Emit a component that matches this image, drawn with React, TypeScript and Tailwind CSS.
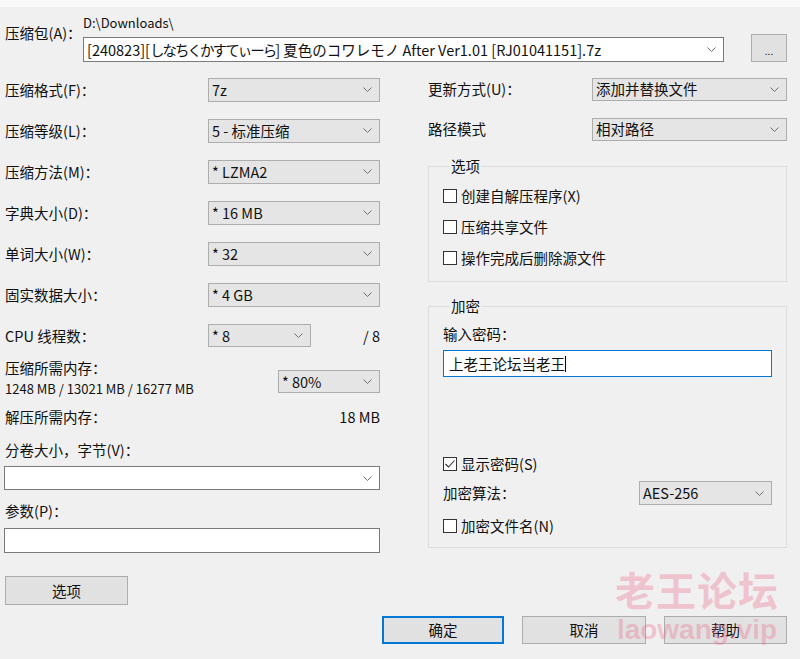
import clsx from "clsx";

function Chevron() {
  return (
    <svg width="9" height="5" viewBox="0 0 9 5" className="shrink-0">
      <path d="M0.5 0.5 L4.5 4.5 L8.5 0.5" stroke="#707070" strokeWidth="1" fill="none" />
    </svg>
  );
}

function Combo({ text, className, white }: { text?: React.ReactNode; className?: string; white?: boolean }) {
  return (
    <div
      className={clsx(
        "flex items-center border pl-[3px] pr-[7px] leading-[16px]",
        white ? "bg-white border-[#7a7a7a]" : "bg-[#e5e5e5] border-[#adadad]",
        className
      )}
    >
      <span className="flex-1 whitespace-nowrap">{text}</span>
      <Chevron />
    </div>
  );
}

function Check({ label, checked }: { label: string; checked?: boolean }) {
  return (
    <div className="flex items-center gap-[4px] leading-[16px]">
      <span className="w-[14px] h-[14px] border border-[#333] bg-white flex items-center justify-center">
        {checked && (
          <svg width="12" height="12" viewBox="0 0 12 12">
            <path d="M1.5 6 L4.5 9 L10.5 2.5" stroke="#333" strokeWidth="1.1" fill="none" />
          </svg>
        )}
      </span>
      <span>{label}</span>
    </div>
  );
}

function Btn({ label, className }: { label: string; className?: string }) {
  return (
    <div className={clsx("flex items-center justify-center bg-[#e1e1e1] border border-[#adadad] leading-[16px]", className)}>
      {label}
    </div>
  );
}

const rows = [
  { label: "压缩格式(F)：", value: "7z" },
  { label: "压缩等级(L)：", value: "5 - 标准压缩" },
  { label: "压缩方法(M)：", value: "* LZMA2" },
  { label: "字典大小(D)：", value: "* 16 MB" },
  { label: "单词大小(W)：", value: "* 32" },
  { label: "固实数据大小：", value: "* 4 GB" },
];

export default function App() {
  return (
    <div className="w-[800px] h-[659px] bg-[#f0f0f0] relative overflow-hidden text-[14.5px] text-[#111] font-['Noto_Sans_CJK_SC',sans-serif]">
      <div className="h-[7px] bg-[#f9f9f9]" />

      {/* archive path */}
      <div className="flex items-start">
        <div className="w-[83px] pl-[5px] mt-[18px] leading-[16px]">压缩包(A)：</div>
        <div className="w-[641px]">
          <div className="mt-[8px] leading-[16px] text-[13px]">D:\Downloads\</div>
          <Combo
            white
            className="mt-[6px] h-[25px]"
            text={
              <>
                [240823][<span className="tracking-[-2px]">しなちくかすてぃーら</span>] 夏色のコワレモノ After Ver1.01 [RJ01041151].7z
              </>
            }
          />
        </div>
        <div className="ml-[27px] mt-[27px] w-[36px] h-[28px] bg-[#e1e1e1] border border-[#adadad] flex items-end justify-center pb-[5px] text-[10px] leading-[10px]">
          ...
        </div>
      </div>

      <div className="flex mt-[7px]">
        {/* left column */}
        <div className="w-[376px] ml-[4px] flex flex-col">
          {rows.map((r) => (
            <div key={r.label} className="h-[41px] flex items-center">
              <span className="pl-[1px] leading-[16px]">{r.label}</span>
              <Combo text={r.value} className="ml-auto w-[172px] h-[24px]" />
            </div>
          ))}
          <div className="h-[41px] flex items-center">
            <span className="w-[204px] pl-[1px] leading-[16px]">CPU 线程数：</span>
            <Combo text="* 8" className="w-[103px] h-[23px]" />
            <span className="ml-auto leading-[16px]">/ 8</span>
          </div>

          <div className="flex pt-[4px]">
            <div className="pl-[1px] leading-[16px]">
              <div>压缩所需内存：</div>
              <div className="mt-[5px] text-[13px]">1248 MB / 13021 MB / 16277 MB</div>
            </div>
            <Combo text="* 80%" className="ml-auto mt-[10px] w-[102px] h-[23px]" />
          </div>

          <div className="mt-[12px] flex leading-[16px]">
            <span className="pl-[1px]">解压所需内存：</span>
            <span className="ml-auto">18 MB</span>
          </div>

          <div className="mt-[17px] pl-[1px] leading-[16px]">分卷大小，字节(V)：</div>
          <Combo white className="mt-[8px] h-[24px]" />

          <div className="mt-[13px] pl-[1px] leading-[16px]">参数(P)：</div>
          <div className="mt-[9px] h-[25px] bg-white border border-[#7a7a7a]" />

          <Btn label="选项" className="mt-[23px] ml-[1px] w-[123px] h-[29px]" />
        </div>

        {/* right column */}
        <div className="ml-[48px] w-[359px] flex flex-col">
          <div className="h-[40px] flex items-center">
            <span className="leading-[16px]">更新方式(U)：</span>
            <Combo text="添加并替换文件" className="ml-auto w-[195px] h-[23px]" />
          </div>
          <div className="h-[40px] flex items-center">
            <span className="leading-[16px]">路径模式</span>
            <Combo text="相对路径" className="ml-auto w-[195px] h-[23px]" />
          </div>

          <fieldset className="mt-[9px] border border-[#dcdcdc] pl-[14px] pr-[14px] pb-[8px]">
            <legend className="ml-[7px] px-[1px] leading-[16px]">选项</legend>
            <div className="pt-[6px]">
              <div className="h-[31px] flex items-center">
                <Check label="创建自解压程序(X)" />
              </div>
              <div className="h-[31px] flex items-center">
                <Check label="压缩共享文件" />
              </div>
              <div className="h-[31px] flex items-center">
                <Check label="操作完成后删除源文件" />
              </div>
            </div>
          </fieldset>

          <fieldset className="mt-[16px] border border-[#dcdcdc] pl-[14px] pr-[14px] pb-[13px]">
            <legend className="ml-[7px] px-[1px] leading-[16px]">加密</legend>
            <div className="mt-[12px] leading-[16px]">输入密码：</div>
            <div className="mt-[8px] h-[27px] bg-white border border-[#0078d7] flex items-center pl-[5px] leading-[16px]">
              <span>上老王论坛当老王</span>
              <span className="w-px h-[16px] bg-black" />
            </div>
            <div className="mt-[79px]">
              <Check label="显示密码(S)" checked />
            </div>
            <div className="mt-[9px] h-[24px] flex items-center">
              <span className="leading-[16px]">加密算法：</span>
              <Combo text="AES-256" className="ml-auto w-[133px] h-[24px]" />
            </div>
            <div className="mt-[13px]">
              <Check label="加密文件名(N)" />
            </div>
          </fieldset>
        </div>
      </div>

      <div className="mt-[11px] flex justify-end pr-[13px] gap-[18px]">
        <Btn label="确定" className="w-[122px] h-[28px] !border-2 !border-[#0078d7]" />
        <Btn label="取消" className="w-[124px] h-[28px]" />
        <Btn label="帮助" className="w-[123px] h-[28px]" />
      </div>

      {/* watermark */}
      <div className="absolute left-[612px] top-[564px] w-[170px] flex flex-col items-center text-[rgba(238,110,142,0.34)] pointer-events-none">
        <div className="text-[40px] leading-[50px] font-bold tracking-[1px]">老王论坛</div>
        <div className="text-[28px] leading-[32px] font-bold font-['Liberation_Sans',sans-serif]">laowang.vip</div>
      </div>
    </div>
  );
}
